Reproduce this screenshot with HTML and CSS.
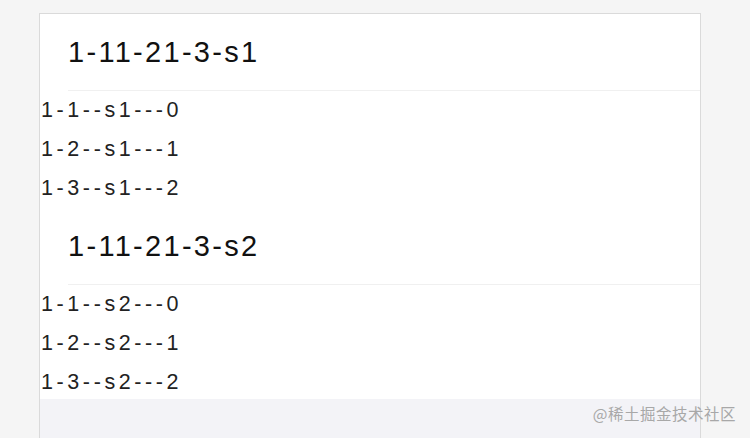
FILE: index.html
```html
<!DOCTYPE html>
<html lang="en">
<head>
  <meta charset="UTF-8">
  <meta name="viewport" content="width=device-width, initial-scale=1.0">
  <title>Section list</title>
  <link rel="stylesheet" href="styles.css">
</head>
<body>
  <div class="frame">
    <div class="scroll">
      <div class="section">
        <div class="section-title">1-11-21-3-s1</div>
        <div class="item">1-1--s1---0</div>
        <div class="item">1-2--s1---1</div>
        <div class="item">1-3--s1---2</div>
      </div>
      <div class="section">
        <div class="section-title">1-11-21-3-s2</div>
        <div class="item">1-1--s2---0</div>
        <div class="item">1-2--s2---1</div>
        <div class="item">1-3--s2---2</div>
      </div>
    </div>
  </div>

  <div class="watermark">@稀土掘金技术社区</div>
</body>
</html>
```

FILE: styles.css
```css
body {
  margin: 0;
  height: 438px;
  overflow: hidden;
  background-color: #f5f5f5;
  font-family: 'Liberation Sans', Arial, sans-serif;
  position: relative;
}

.frame {
  margin: 13px 0 0 39px;
  width: 660px;
  height: 440px;
  border: 1px solid #dadada;
  border-bottom: none;
  background-color: #f3f3f7;
}

.scroll {
  height: 385px;
  overflow: hidden;
  background-color: #ffffff;
}

.section-title {
  margin-left: 28px;
  height: 76px;
  line-height: 76px;
  font-size: 29px;
  letter-spacing: 2.3px;
  color: #111111;
  border-bottom: 1px solid #f0f0f0;
}

.item {
  padding-left: 1px;
  height: 39px;
  line-height: 39px;
  font-size: 21.5px;
  letter-spacing: 3.6px;
  color: #222222;
}

.watermark {
  position: absolute;
  right: 14px;
  top: 402px;
  font-family: 'Noto Sans CJK SC', sans-serif;
  font-size: 15.5px;
  color: #a8a8a8;
  letter-spacing: 0.5px;
}
```
